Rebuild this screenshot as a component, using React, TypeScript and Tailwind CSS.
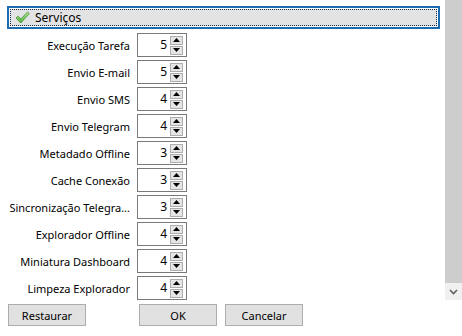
import React from "react";

const rows = [
  { label: "Execução Tarefa", value: 5 },
  { label: "Envio E-mail", value: 5 },
  { label: "Envio SMS", value: 4 },
  { label: "Envio Telegram", value: 4 },
  { label: "Metadado Offline", value: 3 },
  { label: "Cache Conexão", value: 3 },
  { label: "Sincronização Telegra...", value: 3 },
  { label: "Explorador Offline", value: 4 },
  { label: "Miniatura Dashboard", value: 4 },
  { label: "Limpeza Explorador", value: 4 },
];

function Check() {
  return (
    <svg width="15" height="13" viewBox="0 0 15 13">
      <defs>
        <linearGradient id="g" x1="0" y1="0" x2="0" y2="1">
          <stop offset="0" stopColor="#b4eb94" />
          <stop offset="1" stopColor="#4fae37" />
        </linearGradient>
      </defs>
      <path d="M1 7 L3.2 5.2 L5.8 8 L12.5 1 L14.3 2.6 L5.8 12 Z" fill="url(#g)" stroke="#3f8f34" strokeWidth="0.8" strokeLinejoin="round" />
    </svg>
  );
}

function Spinner({ value }: { value: number }) {
  return (
    <div className="flex h-[24px] w-[50px] items-center border border-[#7a7a7a] bg-white pl-1 pr-[3px]">
      <span className="flex-1 text-right text-[12px] leading-none">{value}</span>
      <div className="ml-[3px] flex flex-col gap-[1px]">
        <div className="flex h-[9px] w-[13px] items-center justify-center border border-[#adadad] bg-[#e5e5e5]">
          <svg width="7" height="4" viewBox="0 0 7 4"><path d="M3.5 0 L7 4 L0 4 Z" fill="#000" /></svg>
        </div>
        <div className="flex h-[9px] w-[13px] items-center justify-center border border-[#adadad] bg-[#e5e5e5]">
          <svg width="7" height="4" viewBox="0 0 7 4"><path d="M0 0 L7 0 L3.5 4 Z" fill="#000" /></svg>
        </div>
      </div>
    </div>
  );
}

export default function App() {
  return (
    <div className="flex h-[336px] w-[462px] bg-white font-['Noto_Sans',sans-serif] text-[11px] text-black">
      <div className="flex w-[445px] flex-col">
        {/* Group header */}
        <div className="ml-[7px] mt-[6px] h-[23px] w-[433px] border-2 border-[#1e6cb0] p-[1px]">
          <div className="flex h-full items-center gap-[5px] border border-dotted border-[#1a2a4a] bg-[#e3e3e3] pl-[4px]">
            <Check />
            <span className="text-[12px] leading-none">Serviços</span>
          </div>
        </div>

        {/* Rows */}
        <div className="mt-[4px] flex flex-col gap-[3px]">
          {rows.map((r) => (
            <div key={r.label} className="flex items-center">
              <div className="w-[131px] whitespace-nowrap pr-[1px] text-right leading-none">{r.label}</div>
              <div className="ml-[6px]">
                <Spinner value={r.value} />
              </div>
            </div>
          ))}
        </div>

        {/* Buttons */}
        <div className="mt-[4px] flex">
          <button className="ml-[8px] h-[22px] w-[78px] border border-[#adadad] bg-[#e1e1e1] leading-none">Restaurar</button>
          <button className="ml-[53px] h-[22px] w-[78px] border border-[#adadad] bg-[#e1e1e1] leading-none">OK</button>
          <button className="ml-[8px] h-[22px] w-[78px] border border-[#adadad] bg-[#e1e1e1] leading-none">Cancelar</button>
        </div>
      </div>

      {/* Scrollbar */}
      <div className="flex h-[300px] w-[17px] flex-col">
        <div className="flex-1 bg-[#cdcdcd]" />
        <div className="flex h-[17px] items-center justify-center bg-[#f0f0f0]">
          <svg width="9" height="6" viewBox="0 0 9 6"><path d="M1 1 L4.5 4.5 L8 1" fill="none" stroke="#606060" strokeWidth="1.6" /></svg>
        </div>
      </div>
    </div>
  );
}
